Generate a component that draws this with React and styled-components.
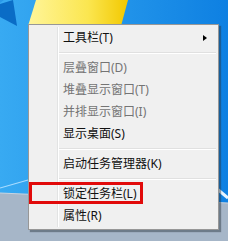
import React from 'react';
import styled, {createGlobalStyle} from 'styled-components';

const GlobalStyle = createGlobalStyle`
  html, body {
    margin: 0;
    padding: 0;
    background: #1a8ae6;
  }
  body {
    font-family: "Noto Sans", "Noto Sans CJK SC", sans-serif;
  }
`;

const Desktop = styled.div`
  position: relative;
  width: 228px;
  height: 241px;
  overflow: hidden;
`;

const Wallpaper = styled.svg`
  display: block;
`;

const Menu = styled.ul`
  position: absolute;
  left: 28px;
  top: 24px;
  width: 185px;
  margin: 0;
  padding: 2px;
  list-style: none;
  background: #f0f0f0;
  border: 1px solid #979797;
  box-shadow: 2px 2px 1px rgba(40, 50, 60, 0.45);
  display: flex;
  flex-direction: column;
  &::before {
    content: '';
    position: absolute;
    top: 2px;
    bottom: 2px;
    left: 28px;
    width: 1px;
    background: #e2e3e3;
    border-right: 1px solid #ffffff;
  }
`;

const Item = styled.li`
  position: relative;
  height: 22px;
  line-height: 22px;
  padding-left: 32px;
  font-size: 12px;
  color: ${p => (p.$disabled ? '#747474' : '#111')};
  white-space: nowrap;
`;

const Separator = styled.li`
  height: 8px;
  display: flex;
  align-items: center;
  padding-left: 27px;
  &::after {
    content: '';
    flex: 1;
    height: 1px;
    background: #e0e0e0;
    border-bottom: 1px solid #ffffff;
  }
`;

const Arrow = styled.span`
  position: absolute;
  right: 9px;
  top: 8px;
  width: 0;
  height: 0;
  border-top: 3.5px solid transparent;
  border-bottom: 3.5px solid transparent;
  border-left: 4px solid #000;
`;

const Highlight = styled.span`
  position: absolute;
  left: -2px;
  top: -1px;
  width: 108px;
  height: 16px;
  border: 3px solid #e10a0a;
`;

const items = [
  {label: '工具栏(T)', sub: true},
  'sep',
  {label: '层叠窗口(D)', disabled: true},
  {label: '堆叠显示窗口(T)', disabled: true},
  {label: '并排显示窗口(I)', disabled: true},
  {label: '显示桌面(S)'},
  'sep',
  {label: '启动任务管理器(K)'},
  'sep',
  {label: '锁定任务栏(L)', marked: true},
  {label: '属性(R)'},
];

function WallpaperArt() {
  return (
    <Wallpaper width="228" height="241" viewBox="0 0 228 241">
      <defs>
        <linearGradient id="sky" x1="0" y1="0" x2="1" y2="0">
          <stop offset="0" stopColor="#38aaf2" />
          <stop offset="1" stopColor="#0e80e2" />
        </linearGradient>
        <linearGradient id="sun" x1="0" y1="0" x2="1" y2="0">
          <stop offset="0" stopColor="#fff59a" />
          <stop offset="0.6" stopColor="#fbe650" />
          <stop offset="1" stopColor="#f2c800" />
        </linearGradient>
      </defs>
      <rect width="228" height="241" fill="url(#sky)" />
      <polygon points="0,4 13,0 17,26 0,17" fill="#0a6cc6" />
      <polygon points="0,0 4,0 0,3" fill="#2b98e8" />
      <polygon points="36,0 128,0 121,26 28,26" fill="url(#sun)" />
      <path d="M0 188 L28 180" stroke="#a8dcff" strokeWidth="1.2" />
      <path d="M216 188 L228 198" stroke="#e6f4ff" strokeWidth="3" />
      <polygon points="0,193 228,203 228,241 0,241" fill="#a6b6c8" />
      <path d="M0 193 L228 203" stroke="#c8d4e0" strokeWidth="1" />
    </Wallpaper>
  );
}

export default function App() {
  return (
    <>
      <GlobalStyle />
      <Desktop>
        <WallpaperArt />
        <Menu>
          {items.map((it, i) =>
            it === 'sep' ? (
              <Separator key={i} />
            ) : (
              <Item key={i} $disabled={it.disabled}>
                {it.label}
                {it.sub && <Arrow />}
                {it.marked && <Highlight />}
              </Item>
            )
          )}
        </Menu>
      </Desktop>
    </>
  );
}
